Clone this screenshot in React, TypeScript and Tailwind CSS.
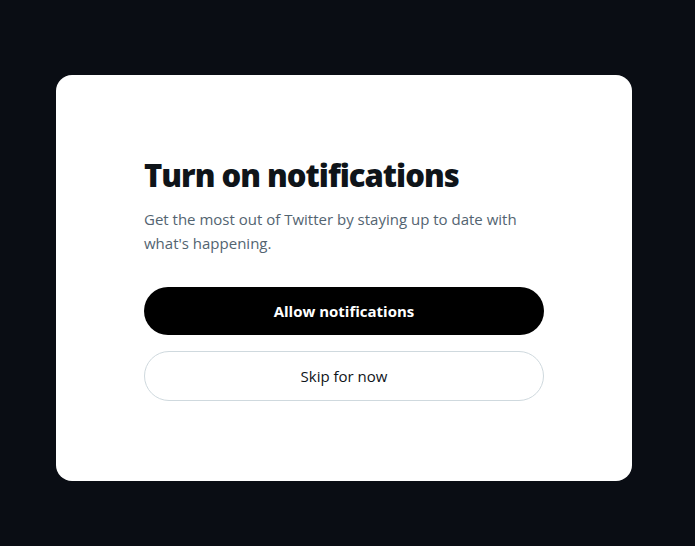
export default function App() {
  return (
    <div
      className="min-h-[546px] w-full bg-[#0a0d14] pl-[56px] pt-[75px]"
      style={{ fontFamily: '"Open Sans", "Noto Sans", Arial, sans-serif' }}
    >
      <div className="flex h-[406px] w-[576px] flex-col rounded-2xl bg-white px-[88px] pt-[80px]">
        <h1 className="text-[31px] font-extrabold leading-[40px] tracking-[-1px] text-[#0f1419]">
          Turn on notifications
        </h1>
        <p className="mt-[12px] text-[15px] leading-[24px] text-[#536471]">
          Get the most out of Twitter by staying up to date with what's happening.
        </p>
        <button className="mt-[32px] h-[48px] w-[400px] rounded-full bg-black text-[15px] font-bold text-white">
          Allow notifications
        </button>
        <button className="mt-[16px] h-[50px] w-[400px] rounded-full border border-[#cfd9de] bg-white text-[15px] font-medium text-[#0f1419]">
          Skip for now
        </button>
      </div>
    </div>
  );
}
